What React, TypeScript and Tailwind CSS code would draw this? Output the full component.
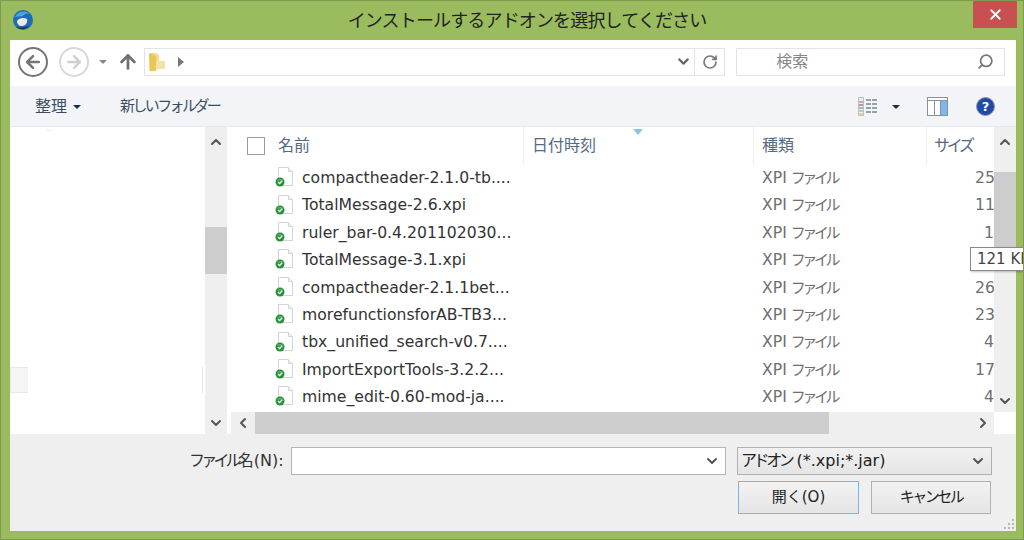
import { ArrowLeft, ArrowRight, ArrowUp, ChevronDown, ChevronLeft, ChevronRight, ChevronUp, RotateCw, Search, X } from "lucide-react";

const jp = "font-['DejaVu_Sans','Noto_Sans_CJK_JP',sans-serif]";

const files = [
  { name: "compactheader-2.1.0-tb....", size: "25" },
  { name: "TotalMessage-2.6.xpi", size: "11" },
  { name: "ruler_bar-0.4.201102030...", size: "1" },
  { name: "TotalMessage-3.1.xpi", size: "" },
  { name: "compactheader-2.1.1bet...", size: "26" },
  { name: "morefunctionsforAB-TB3...", size: "23" },
  { name: "tbx_unified_search-v0.7....", size: "4" },
  { name: "ImportExportTools-3.2.2...", size: "17" },
  { name: "mime_edit-0.60-mod-ja....", size: "4" },
];

function FileIcon() {
  return (
    <svg width="20" height="20" viewBox="0 0 20 20" className="shrink-0">
      <path d="M3.5 0.5h10l4 4v14h-14z" fill="#fff" stroke="#d4d4d4" />
      <path d="M13.5 0.5v4h4" fill="#f1f1f1" stroke="#d4d4d4" />
      <circle cx="5" cy="15" r="4.5" fill="#27913a" />
      <path d="M1.5 13.5a4 3 0 0 1 7 0z" fill="#5cc06a" />
      <path d="M3 15l1.6 1.6 2.6-2.8" fill="none" stroke="#fff" strokeWidth="1.3" />
    </svg>
  );
}

function FileRow({ name, size }: { name: string; size: string }) {
  return (
    <div className="flex h-[27.4px] items-center">
      <div className="mb-[1px] flex w-[64px] justify-end">
        <FileIcon />
      </div>
      <div className="ml-[7px] w-[460px] truncate text-[#333]">{name}</div>
      <div className="w-[213px] whitespace-nowrap text-[#6f6f6f]">
        XPI <span className="ml-[-1px] text-[15px] tracking-[-3.4px]">ファイル</span>
      </div>
      <div className="w-[19px] overflow-hidden whitespace-nowrap text-right text-[#6f6f6f]">{size}</div>
    </div>
  );
}

export default function App() {
  return (
    <div className={`relative flex h-[540px] w-[1024px] flex-col overflow-hidden border border-[#7e9a4c] bg-[#9bbb5f] pb-[8px] pl-[9px] pr-[7px] ${jp}`}>
      <header className="relative flex h-[39px] shrink-0 items-center justify-center pl-[28px]">
        <svg width="22" height="22" viewBox="0 0 22 22" className="absolute left-[2px] top-[8px]">
          <circle cx="11" cy="11" r="10" fill="#1c6db5" />
          <path d="M3 8c3-6 10-7 15-3-3-1-6 0-7 2z" fill="#4aa3dd" />
          <path d="M5 12c2-3 6-4 10-2 1 4-2 7-5 7-3 0-5-2-5-5z" fill="#ece9e9" />
          <path d="M4 18c3 3 10 3 13-1-4 1-9 2-13 1z" fill="#26344f" />
        </svg>
        <h1 className="text-[18px] tracking-[-0.85px] text-[#222]">インストールするアドオンを選択してください</h1>
        <button className="absolute right-[-1px] top-0 flex h-[27px] w-[44px] items-center justify-center bg-[#c75050] text-white">
          <X size={17} strokeWidth={2.5} />
        </button>
      </header>

      <div className="flex min-h-0 flex-1 flex-col bg-white">
        <nav className="flex h-[46px] shrink-0 items-center pb-[3px] pl-[8px] pr-[11px]">
          <span className="flex h-[30px] w-[30px] items-center justify-center rounded-full border-2 border-[#757575] text-[#757575]">
            <ArrowLeft size={20} strokeWidth={3} />
          </span>
          <span className="ml-[11px] flex h-[30px] w-[30px] items-center justify-center rounded-full border-2 border-[#d8d8d8] text-[#d0d0d0]">
            <ArrowRight size={20} strokeWidth={3} />
          </span>
          <span className="ml-[10px] h-0 w-0 border-x-[4px] border-t-[4px] border-x-transparent border-t-[#888]" />
          <ArrowUp size={22} strokeWidth={3} className="ml-[10px] text-[#707070]" />
          <div className="ml-[5px] flex h-[28px] w-[582px] items-center border border-[#e3e3e3] pl-[3px]">
            <svg width="20" height="20" viewBox="0 0 20 20">
              <path d="M1 1h7l3 2v13l-4 3H1z" fill="#f6dc8a" />
              <path d="M1 1l7 3v15H2z" fill="#eac557" />
              <path d="M8 9h9v8H8z" fill="#f5e3a6" />
            </svg>
            <span className="ml-[10px] h-0 w-0 border-y-[5px] border-l-[6px] border-y-transparent border-l-[#777]" />
            <ChevronDown size={17} strokeWidth={3} className="ml-auto mr-[2px] text-[#666]" />
            <div className="flex h-full w-[30px] items-center justify-center border-l border-[#e3e3e3]">
              <RotateCw size={16} strokeWidth={2.5} className="text-[#777]" />
            </div>
          </div>
          <div className="ml-[11px] flex h-[28px] w-[269px] items-center border border-[#e3e3e3] pl-[39px] pr-[10px] text-[16px] text-[#888]">
            検索
            <Search size={17} strokeWidth={2.5} className="ml-auto -scale-x-100 text-[#777]" />
          </div>
        </nav>

        <div className="flex h-[41px] shrink-0 items-center border-b border-[#e6e8ec] bg-[#f3f4f7] pl-[25px] pr-[21px] pt-[1px] text-[16px] text-[#3b4d62]">
          <span>整理</span>
          <span className="ml-[6px] h-0 w-0 border-x-[4px] border-t-[4px] border-x-transparent border-t-[#1b2c49]" />
          <span className="ml-[39px] text-[15px] tracking-[-2.6px]">新しいフォルダー</span>
          <svg width="20" height="19" viewBox="0 0 20 19" className="ml-auto">
            <path d="M0.5 0.5h5v18h-5z" fill="#e9edf2" stroke="#b9c0c8" />
            <path d="M1 4h4v2H1z" fill="#9fc3a0" />
            <path d="M1 7h4v2H1z" fill="#e08a8a" />
            <path d="M1 10h4v2H1z" fill="#9dbbe0" />
            <path d="M1 13h4v2H1z" fill="#b7d69a" />
            <path d="M1 16h4v2H1z" fill="#ead77f" />
            <path d="M8 3h12M8 7h12M8 11h12M8 15h12" stroke="#7b8593" strokeWidth="1.4" strokeDasharray="5 1" />
          </svg>
          <span className="ml-[14px] h-0 w-0 border-x-[4px] border-t-[4px] border-x-transparent border-t-[#1b2c49]" />
          <svg width="21" height="19" viewBox="0 0 21 19" className="ml-[27px]">
            <rect x="0.5" y="0.5" width="20" height="18" fill="#fff" stroke="#8a9098" />
            <rect x="13" y="4" width="7" height="14" fill="#7cb8ef" />
            <path d="M1 3.5h19M7.5 4v14M13.5 4v14" stroke="#8a9098" />
          </svg>
          <span className="ml-[28px] flex h-[19px] w-[19px] items-center justify-center rounded-full border border-[#8a93ad] bg-[#1f4aa8] text-[13px] font-bold text-white">?</span>
        </div>

        <main className="relative flex min-h-0 flex-1 text-[15.65px]">
          <aside className="relative w-[195px] shrink-0 bg-white">
            <span className="absolute left-[36px] top-[3px] h-[1px] w-[6px] bg-[#f7eecb]" />
            <div className="absolute left-0 top-[240px] flex h-[26px] w-[193px] justify-between">
              <span className="w-[18px] border border-r-0 border-[#e8e8e8] bg-[#f5f5f5]" />
              <span className="w-[1px] bg-[#e8e8e8]" />
            </div>
          </aside>
          <div className="flex w-[22px] shrink-0 flex-col items-center bg-[#efefef] text-[#555]">
            <ChevronUp size={16} strokeWidth={3} className="mt-[7px]" />
            <div className="mt-[77px] h-[47px] w-full bg-[#cdcdcd]" />
            <ChevronDown size={16} strokeWidth={3} className="mt-auto mb-[3px]" />
          </div>

          <div className="ml-[4px] flex min-w-0 flex-1 flex-col">
            <div className="flex min-h-0 flex-1">
              <div className="min-w-0 flex-1 overflow-hidden">
                <div className="relative flex h-[37px] text-[16px] text-[#566a82]">
                  <div className="flex w-[292px] items-center">
                    <span className="ml-[16px] h-[18px] w-[18px] border border-[#9a9a9a]" />
                    <span className="ml-[13px]">名前</span>
                  </div>
                  <div className="flex w-[230px] items-center border-l border-[#e9eff5] pl-[8px]">日付時刻</div>
                  <div className="flex w-[173px] items-center border-l border-[#e9eff5] pl-[8px]">種類</div>
                  <div className="flex flex-1 items-center whitespace-nowrap border-l border-[#e9eff5] pl-[7px] tracking-[-3.2px]">サイズ</div>
                  <span className="absolute left-[402px] top-[2px] h-0 w-0 border-x-[5px] border-t-[6px] border-x-transparent border-t-[#8fc5de]" />
                </div>
                {files.map((f) => (
                  <FileRow key={f.name} name={f.name} size={f.size} />
                ))}
              </div>
              <div className="flex w-[22px] shrink-0 flex-col items-center bg-[#efefef] text-[#555]">
                <ChevronUp size={16} strokeWidth={3} className="mt-[7px]" />
                <div className="mt-[22px] h-[95px] w-full bg-[#cdcdcd]" />
                <ChevronDown size={16} strokeWidth={3} className="mt-auto mb-[3px]" />
              </div>
            </div>
            <div className="flex h-[22px] shrink-0 text-[#555]">
              <div className="flex flex-1 items-center bg-[#efefef]">
                <ChevronLeft size={16} strokeWidth={3} className="ml-[4px]" />
                <div className="ml-[4px] h-full w-[574px] bg-[#cdcdcd]" />
                <ChevronRight size={16} strokeWidth={3} className="ml-auto mr-[3px]" />
              </div>
              <div className="w-[22px] bg-white" />
            </div>
          </div>
        </main>

        <footer className="relative h-[97px] shrink-0 bg-[#efefef] text-[15px] text-[#333]">
          <div className="box-content flex h-[28px] items-center pl-[179px] pt-[13px]">
            <label className="w-[102px] whitespace-nowrap text-[16px]">
              <span className="tracking-[-3.8px]">ファイル</span>名(N):
            </label>
            <div className="flex h-[28px] w-[435px] items-center justify-end border border-[#b5b5b5] bg-white pr-[5px]">
              <ChevronDown size={16} strokeWidth={3} className="text-[#555]" />
            </div>
            <div className="ml-[11px] flex h-[28px] w-[255px] items-center justify-between whitespace-nowrap border border-[#b0b0b0] bg-gradient-to-b from-[#f2f2f2] to-[#e5e5e5] pl-[3px] pr-[5px] text-[16px] text-[#222]">
              <span>
                <span className="tracking-[-3.4px]">アドオン</span> (*.xpi;*.jar)
              </span>
              <ChevronDown size={16} strokeWidth={3} className="text-[#555]" />
            </div>
          </div>
          <div className="mt-[6px] flex justify-end gap-[12px] pr-[25px]">
            <button className="h-[33px] w-[121px] border border-[#7ab6ee] bg-gradient-to-b from-[#f2f2f2] to-[#e5e5e5] text-[#222]">開く(O)</button>
            <button className="h-[33px] w-[120px] border border-[#b0b0b0] bg-gradient-to-b from-[#f2f2f2] to-[#e5e5e5] tracking-[-2.5px] text-[#222]">キャンセル</button>
          </div>
          <svg width="11" height="11" viewBox="0 0 11 11" className="absolute bottom-[1px] right-[1px]" fill="#b8b8b8">
            <rect x="8" y="0" width="2" height="2" />
            <rect x="4" y="4" width="2" height="2" />
            <rect x="8" y="4" width="2" height="2" />
            <rect x="0" y="8" width="2" height="2" />
            <rect x="4" y="8" width="2" height="2" />
            <rect x="8" y="8" width="2" height="2" />
          </svg>
        </footer>
      </div>

      <div className="absolute left-[969px] top-[246px] flex h-[24px] w-[60px] items-center overflow-hidden whitespace-nowrap border border-[#8a8a8a] bg-white pl-[6px] text-[15px] text-[#444] shadow-[1px_1px_2px_rgba(0,0,0,0.25)]">
        121 KB
      </div>
    </div>
  );
}
